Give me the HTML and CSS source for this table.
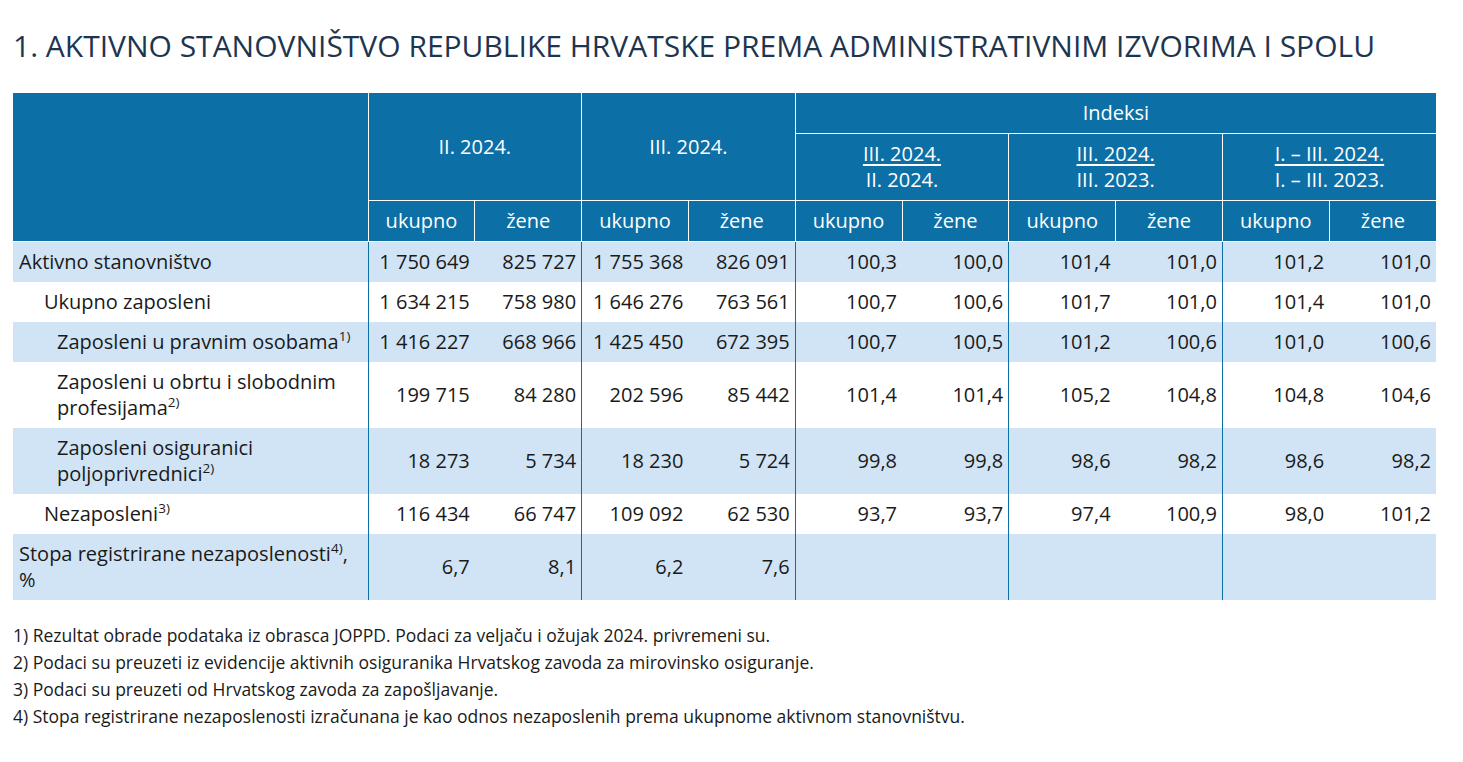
FILE: index.html
```html
<!DOCTYPE html>
<html lang="hr">
<head>
    <meta charset="UTF-8">
    <title>Aktivno stanovništvo</title>
    <link rel="stylesheet" href="styles.css">
</head>
<body>

    <h1 class="title">1. AKTIVNO STANOVNIŠTVO REPUBLIKE HRVATSKE PREMA ADMINISTRATIVNIM IZVORIMA I SPOLU</h1>

    <table class="stat-table">
        <colgroup>
            <col class="col-label">
            <col span="10" class="col-num">
        </colgroup>
        <thead>
            <tr>
                <th rowspan="3"></th>
                <th colspan="2" rowspan="2">II. 2024.</th>
                <th colspan="2" rowspan="2">III. 2024.</th>
                <th colspan="6">Indeksi</th>
            </tr>
            <tr>
                <th colspan="2"><span class="num-line">III. 2024.</span><br>II. 2024.</th>
                <th colspan="2"><span class="num-line">III. 2024.</span><br>III. 2023.</th>
                <th colspan="2"><span class="num-line">I. – III. 2024.</span><br>I. – III. 2023.</th>
            </tr>
            <tr>
                <th>ukupno</th><th>žene</th>
                <th>ukupno</th><th>žene</th>
                <th>ukupno</th><th>žene</th>
                <th>ukupno</th><th>žene</th>
                <th>ukupno</th><th>žene</th>
            </tr>
        </thead>
        <tbody>
            <tr class="shade">
                <td class="label">Aktivno stanovništvo</td>
                <td class="grp">1 750 649</td><td>825 727</td>
                <td class="grp">1 755 368</td><td>826 091</td>
                <td class="grp">100,3</td><td>100,0</td>
                <td class="grp">101,4</td><td>101,0</td>
                <td class="grp">101,2</td><td>101,0</td>
            </tr>
            <tr>
                <td class="label lvl1">Ukupno zaposleni</td>
                <td class="grp">1 634 215</td><td>758 980</td>
                <td class="grp">1 646 276</td><td>763 561</td>
                <td class="grp">100,7</td><td>100,6</td>
                <td class="grp">101,7</td><td>101,0</td>
                <td class="grp">101,4</td><td>101,0</td>
            </tr>
            <tr class="shade">
                <td class="label lvl2">Zaposleni u pravnim osobama<sup>1)</sup></td>
                <td class="grp">1 416 227</td><td>668 966</td>
                <td class="grp">1 425 450</td><td>672 395</td>
                <td class="grp">100,7</td><td>100,5</td>
                <td class="grp">101,2</td><td>100,6</td>
                <td class="grp">101,0</td><td>100,6</td>
            </tr>
            <tr>
                <td class="label lvl2">Zaposleni u obrtu i slobodnim<br>profesijama<sup>2)</sup></td>
                <td class="grp">199 715</td><td>84 280</td>
                <td class="grp">202 596</td><td>85 442</td>
                <td class="grp">101,4</td><td>101,4</td>
                <td class="grp">105,2</td><td>104,8</td>
                <td class="grp">104,8</td><td>104,6</td>
            </tr>
            <tr class="shade">
                <td class="label lvl2">Zaposleni osiguranici<br>poljoprivrednici<sup>2)</sup></td>
                <td class="grp">18 273</td><td>5 734</td>
                <td class="grp">18 230</td><td>5 724</td>
                <td class="grp">99,8</td><td>99,8</td>
                <td class="grp">98,6</td><td>98,2</td>
                <td class="grp">98,6</td><td>98,2</td>
            </tr>
            <tr>
                <td class="label lvl1">Nezaposleni<sup>3)</sup></td>
                <td class="grp">116 434</td><td>66 747</td>
                <td class="grp">109 092</td><td>62 530</td>
                <td class="grp">93,7</td><td>93,7</td>
                <td class="grp">97,4</td><td>100,9</td>
                <td class="grp">98,0</td><td>101,2</td>
            </tr>
            <tr class="shade">
                <td class="label">Stopa registrirane nezaposlenosti<sup>4)</sup>,<br>%</td>
                <td class="grp">6,7</td><td>8,1</td>
                <td class="grp">6,2</td><td>7,6</td>
                <td class="grp"></td><td></td>
                <td class="grp"></td><td></td>
                <td class="grp"></td><td></td>
            </tr>
        </tbody>
    </table>

    <div class="notes">
        <p>1) Rezultat obrade podataka iz obrasca JOPPD. Podaci za veljaču i ožujak 2024. privremeni su.</p>
        <p>2) Podaci su preuzeti iz evidencije aktivnih osiguranika Hrvatskog zavoda za mirovinsko osiguranje.</p>
        <p>3) Podaci su preuzeti od Hrvatskog zavoda za zapošljavanje.</p>
        <p>4) Stopa registrirane nezaposlenosti izračunana je kao odnos nezaposlenih prema ukupnome aktivnom stanovništvu.</p>
    </div>

</body>
</html>
```

FILE: styles.css
```css
body {
    font-family: 'Open Sans', sans-serif;
    margin: 0;
    padding: 0 13px;
    background-color: #fff;
    color: #1a1a1a;
}

.title {
    font-size: 30px;
    font-weight: 400;
    line-height: 40px;
    color: #1e3550;
    margin: 26px 0 27px;
}

.stat-table {
    width: 1423px;
    border-collapse: collapse;
    table-layout: fixed;
    font-size: 20px;
    line-height: 26px;
}

.col-label {
    width: 355px;
}

.col-num {
    width: 106.8px;
}

.stat-table th {
    background-color: #0c6fa5;
    color: #fff;
    font-weight: 400;
    text-align: center;
    padding: 7px 4px;
    border: 1px solid #fff;
}

.stat-table thead tr:first-child th {
    border-top: none;
}

.stat-table thead th:first-child {
    border-left: none;
}

.stat-table thead th:last-child {
    border-right: none;
}

.num-line {
    text-decoration: underline;
    text-underline-offset: 3px;
}

.stat-table td {
    text-align: right;
    padding: 7px 5px;
    white-space: nowrap;
}

.stat-table td.grp {
    border-left: 1px solid #0c6fa5;
}

.stat-table td.label {
    text-align: left;
    padding-left: 6px;
    white-space: normal;
}

.stat-table td.lvl1 {
    padding-left: 31px;
}

.stat-table td.lvl2 {
    padding-left: 44px;
}

.stat-table tr.shade td {
    background-color: #d0e4f5;
}

.stat-table sup {
    font-size: 13.5px;
    line-height: 0;
    vertical-align: 8px;
}

.notes {
    margin-top: 22px;
    font-size: 17.5px;
    line-height: 27px;
}

.notes p {
    margin: 0;
}
```
